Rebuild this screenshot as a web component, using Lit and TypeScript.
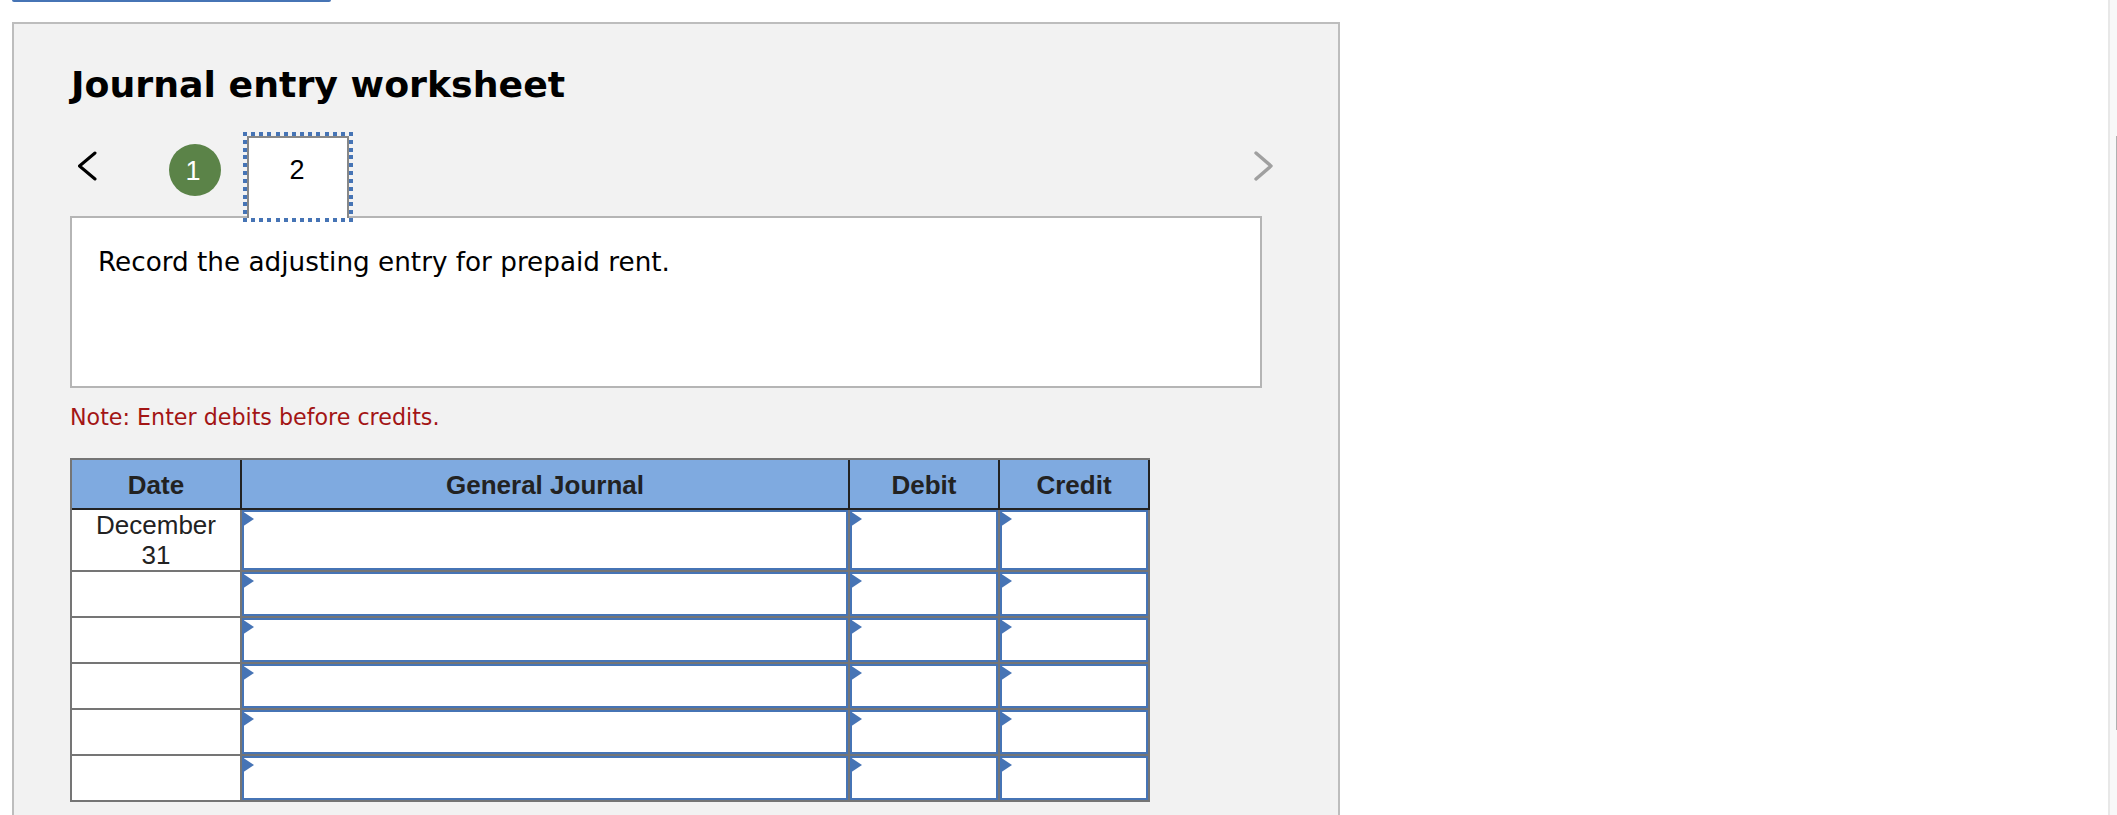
import { LitElement, html, css } from "lit";
import { customElement } from "lit/decorators.js";

const HEADERS = ["Date", "General Journal", "Debit", "Credit"];
const ROWS = ["December 31", "", "", "", "", ""];

@customElement("app-root")
export class AppRoot extends LitElement {
  static styles = css`
    :host {
      display: flex;
      height: 815px;
      overflow: hidden;
      background: #fff;
      font-family: "DejaVu Sans", Verdana, sans-serif;
      color: #000;
    }

    .main {
      flex: 1;
      min-width: 0;
      padding-left: 12px;
    }

    .topbar {
      width: 319px;
      height: 2px;
      background: #4674b5;
      border-radius: 0 0 4px 4px;
    }

    .panel {
      box-sizing: border-box;
      width: 1328px;
      height: 900px;
      margin-top: 20px;
      padding: 37px 76px 0 56px;
      border: 2px solid #bdbdbd;
      background: #f2f2f2;
    }

    h1 {
      margin: 0 0 0 1px;
      font-size: 36.3px;
      line-height: 48px;
      font-weight: bold;
    }

    .nav {
      display: flex;
      align-items: flex-start;
      height: 82px;
      margin: 27px 0 -2px;
    }

    .prev {
      margin: 15px 71px 0 8px;
    }

    .next {
      margin: 15px -11px 0 auto;
    }

    .done {
      width: 52px;
      height: 52px;
      margin: 8px 26px 0 0;
      padding-right: 4px;
      box-sizing: border-box;
      border-radius: 50%;
      background: #5b8348;
      color: #fff;
      font: 27px/54px "Liberation Sans", Arial, sans-serif;
      text-align: center;
    }

    .current {
      position: relative;
      z-index: 1;
      box-sizing: border-box;
      width: 102px;
      height: 82px;
      padding-right: 2px;
      border: 2px solid #888;
      border-bottom: 0;
      background: #fff;
      font: 27px/64px "Liberation Sans", Arial, sans-serif;
      text-align: center;
    }

    .current::after {
      content: "";
      position: absolute;
      inset: -6px -6px -4px -6px;
      background:
        repeating-linear-gradient(90deg, #4674b5 0 4px, transparent 4px 8.154px) top / 100% 4px no-repeat,
        repeating-linear-gradient(90deg, #4674b5 0 4px, transparent 4px 8.154px) bottom / 100% 4px no-repeat,
        repeating-linear-gradient(180deg, #4674b5 0 4px, transparent 4px 7.818px) left / 4px 100% no-repeat,
        repeating-linear-gradient(180deg, #4674b5 0 4px, transparent 4px 7.818px) right / 4px 100% no-repeat;
    }

    .prompt {
      box-sizing: border-box;
      height: 172px;
      padding: 26px 26px 0;
      border: 2px solid #b5b5b5;
      background: #fff;
      font-size: 26.25px;
      line-height: 36px;
    }

    .note {
      margin: 14px 0 0;
      color: #a31515;
      font-size: 22.2px;
      line-height: 30px;
    }

    .journal {
      width: 1080px;
      margin-top: 26px;
      box-sizing: border-box;
      padding: 2px;
      background: #757575;
      font-family: "Liberation Sans", Arial, sans-serif;
      font-size: 26px;
      color: #222;
      text-align: center;
    }

    .row {
      display: grid;
      grid-template-columns: 168px 606px 148px 148px;
      column-gap: 2px;
    }

    .head {
      height: 50px;
      padding-bottom: 2px;
      box-sizing: border-box;
      margin-right: -2px;
      padding-right: 2px;
      background: #222;
      font-weight: bold;
    }

    .head > div {
      height: 48px;
      line-height: 50px;
      background: #7faae0;
    }

    .body {
      height: 44px;
      margin-top: 2px;
    }

    .body.first {
      height: 60px;
      margin-top: 0;
    }

    .date {
      padding: 0 14px;
      background: #fff;
      line-height: 30px;
    }

    .entry {
      position: relative;
      box-sizing: border-box;
      border: 2px solid #4674b5;
      background: #fff;
    }

    .entry::before {
      content: "";
      position: absolute;
      left: -2px;
      top: -1px;
      width: 12px;
      height: 16px;
      background: #4674b5;
      clip-path: polygon(0 0, 100% 50%, 0 100%);
    }

    .scrollbar {
      box-sizing: border-box;
      width: 9px;
      padding: 136px 0 0 6px;
      border-left: 2px solid #e8e8e8;
      background: #f8f8f8;
    }

    .thumb {
      width: 1px;
      height: 594px;
      background: #b0b0b0;
    }
  `;

  render() {
    return html`
      <div class="main">
        <div class="topbar"></div>
        <div class="panel">
          <h1>Journal entry worksheet</h1>
          <div class="nav">
            <svg class="prev" width="20" height="30" viewBox="0 0 20 30" fill="none" stroke="#000" stroke-width="3" stroke-linecap="round" stroke-linejoin="round">
              <path d="M17 2 L1.5 15 L17 28" />
            </svg>
            <div class="done">1</div>
            <div class="current">2</div>
            <svg class="next" width="20" height="30" viewBox="0 0 20 30" fill="none" stroke="#a0a0a0" stroke-width="3.4" stroke-linecap="round" stroke-linejoin="round">
              <path d="M3 2 L18 15 L3 28" />
            </svg>
          </div>
          <div class="prompt">Record the adjusting entry for prepaid rent.</div>
          <p class="note">Note: Enter debits before credits.</p>
          <div class="journal">
            <div class="row head">
              ${HEADERS.map((h) => html`<div>${h}</div>`)}
            </div>
            ${ROWS.map(
              (date, i) => html`
                <div class="row body ${i === 0 ? "first" : ""}">
                  <div class="date">${date}</div>
                  <div class="entry"></div>
                  <div class="entry"></div>
                  <div class="entry"></div>
                </div>
              `
            )}
          </div>
        </div>
      </div>
      <div class="scrollbar"><div class="thumb"></div></div>
    `;
  }
}
